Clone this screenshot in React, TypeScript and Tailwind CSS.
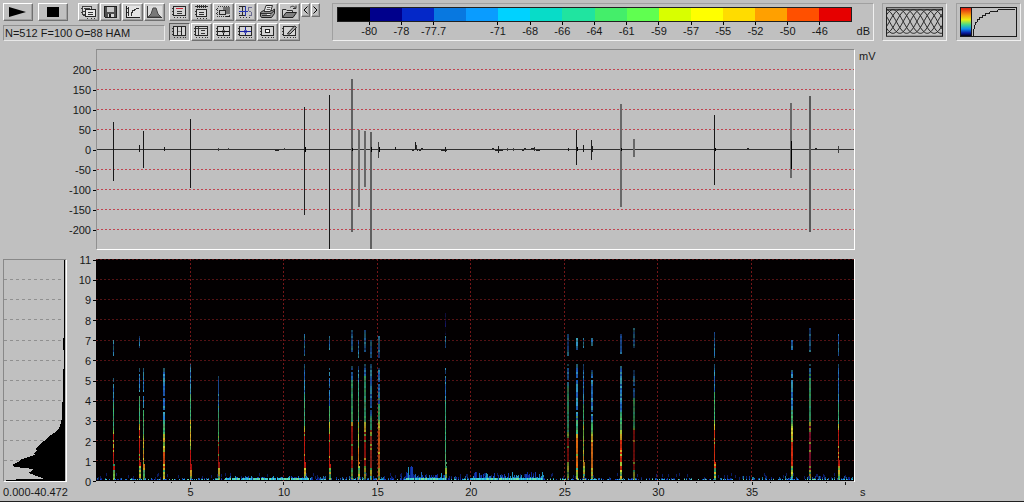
import React from 'react';

const LEVELS = [
  { color: '#000000', label: '-80' },
  { color: '#00008c', label: '-78' },
  { color: '#0428c8', label: '-77.7' },
  { color: '#0878e0', label: '' },
  { color: '#0a9cff', label: '-71' },
  { color: '#00d2ff', label: '-68' },
  { color: '#08dcc8', label: '-66' },
  { color: '#20e4a0', label: '-64' },
  { color: '#44ee6a', label: '-61' },
  { color: '#60ff50', label: '-59' },
  { color: '#d8ff00', label: '-57' },
  { color: '#ffff00', label: '-55' },
  { color: '#ffdc00', label: '-52' },
  { color: '#ffa000', label: '-50' },
  { color: '#ff5000', label: '-46' },
  { color: '#e60000', label: '' },
];

const MILLIVOLTS = [200, 150, 100, 50, 0, -50, -100, -150, -200];
const KILOHERTZ = [11, 10, 9, 8, 7, 6, 5, 4, 3, 2, 1, 0];
const SECONDS = [5, 10, 15, 20, 25, 30, 35];

// x, top, bottom, width, colour
const SPIKES: [number, number, number, number, string][] = [
  [16, 72, 131, 1, '#181818'],
  [42, 95, 102, 1, '#181818'],
  [46, 81, 118, 1, '#181818'],
  [67, 97, 101, 1, '#181818'],
  [93, 69, 138, 1, '#181818'],
  [121, 98, 101, 1, '#404040'],
  [131, 98, 100, 1, '#404040'],
  [187, 98, 100, 1, '#404040'],
  [207, 57, 165, 1, '#202020'],
  [208, 97, 102, 1, '#000'],
  [232, 45, 199, 1, '#181818'],
  [254, 29, 182, 2, '#606060'],
  [255, 98, 101, 1, '#000'],
  [261, 80, 157, 2, '#686868'],
  [267, 81, 137, 2, '#686868'],
  [273, 82, 199, 2, '#606060'],
  [274, 97, 102, 1, '#000'],
  [281, 92, 108, 1, '#404040'],
  [282, 97, 102, 1, '#000'],
  [298, 97, 100, 1, '#181818'],
  [318, 92, 99, 1, '#181818'],
  [319, 95, 99, 1, '#303030'],
  [348, 97, 102, 1, '#181818'],
  [401, 96, 103, 1, '#181818'],
  [410, 98, 101, 1, '#404040'],
  [416, 98, 101, 1, '#404040'],
  [437, 97, 101, 1, '#303030'],
  [471, 98, 101, 1, '#181818'],
  [479, 80, 115, 1, '#181818'],
  [480, 97, 101, 1, '#000'],
  [486, 95, 102, 1, '#181818'],
  [494, 90, 110, 1, '#202020'],
  [495, 96, 102, 1, '#202020'],
  [523, 54, 157, 2, '#686868'],
  [524, 98, 101, 1, '#000'],
  [536, 89, 107, 2, '#686868'],
  [617, 65, 135, 1, '#181818'],
  [618, 98, 101, 1, '#000'],
  [693, 53, 128, 2, '#686868'],
  [694, 91, 119, 1, '#000'],
  [712, 46, 182, 2, '#585858'],
  [741, 96, 103, 1, '#404040'],
];

interface Click {
  x: number;
  w: number;
  upper: [number, number];
  top: number;
  green: number; // kHz under which the streak turns green
  yellow: number;
  red: number;
  hot: string;
  dim: number;
}

const click = (
  x: number, w: number, upper: [number, number], top: number,
  green: number, yellow: number, red: number, hot = '#d81c10', dim = 0.95,
): Click => ({ x, w, upper, top, green, yellow, red, hot, dim });

const CLICKS: Click[] = [
  click(17, 1, [6.3, 7], 5.1, 4, 2.6, 2.4),
  click(43, 1, [6.7, 7.2], 5.6, 4.2, 2.8, 2.6),
  click(47, 1, [0, 0], 5.6, 3.6, 2.4, 1.4, '#e08020'),
  click(67, 2, [0, 0], 5.6, 3, 2.4, 1.4, '#e05010'),
  click(94, 1, [0, 0], 5.8, 4.2, 3.1, 1.6, '#d01410'),
  click(122, 1, [0, 0], 5.2, 3.6, 2.1, 2, '#c01810', 0.85),
  click(208, 1, [6.3, 7.3], 5.8, 4.2, 2.8, 2.3),
  click(233, 1, [6.6, 7.2], 5.6, 3.7, 3, 2.3),
  click(255, 2, [6.5, 7.5], 5.7, 5.2, 3, 2.7, '#c01810', 0.75),
  click(262, 1, [6.2, 7], 5.7, 5, 2.8, 1.6, '#e88018'),
  click(268, 2, [6.5, 7.5], 5.8, 5.2, 3, 2.6, '#c01810', 0.75),
  click(274, 2, [6.2, 7], 5.8, 3.2, 2.6, 2.4, '#c03020', 0.75),
  click(282, 2, [6.2, 7.2], 5.7, 4, 3.1, 2.6, '#e86418', 0.8),
  click(349, 1, [6.7, 7.2], 5.7, 4, 0, 0, '#40e868'),
  click(471, 2, [6.3, 7.3], 5.8, 4.8, 2.4, 2.1, '#b01410', 0.65),
  click(480, 2, [6.6, 7.1], 5.8, 3.2, 2.4, 2.1, '#f07010', 1),
  click(487, 1, [6.7, 7.1], 5.8, 4, 2.9, 1.3, '#e09020', 0.9),
  click(495, 2, [6.8, 7.1], 5.5, 3.1, 2.5, 1.9, '#f07818', 0.9),
  click(524, 2, [6.4, 7.3], 5.8, 3.4, 2.5, 2.1, '#e83010', 0.95),
  click(537, 2, [6.7, 7.6], 5.5, 4.2, 2.6, 2.5, '#b01410', 0.6),
  click(618, 1, [6.2, 7.4], 5.8, 4.6, 3.2, 2.6, '#e03010', 1),
  click(695, 2, [6.6, 7], 5.6, 3.5, 2.8, 2, '#e83010', 0.95),
  click(713, 2, [6.5, 7.6], 5.8, 5.2, 3, 2.6, '#a8143c', 0.75),
  click(742, 1, [6.3, 7.3], 5.8, 4, 3, 2.5),
];

const kHzToY = (kHz: number) => 222 - kHz * 20.13;
const secToX = (s: number) => 1 + s * 18.69;

const makeRandom = (seed: number) => {
  let state = seed;
  return () => {
    state = (state * 1664525 + 1013904223) % 4294967296;
    return state / 4294967296;
  };
};

const BLUES = ['#2060c8', '#2888e0', '#38a8e0', '#2060b8', '#40b0c8'];
const GREENS = ['#38b878', '#48d070', '#58b070', '#38c098'];
const YELLOWS = ['#b0d840', '#e0e038', '#78c848', '#e8b828'];
const FLOOR = ['#0c2cb8', '#1848d8', '#2080e8', '#28b8f0', '#48e0d8', '#80f098'];

interface Cell {
  x: number;
  y: number;
  w: number;
  h: number;
  fill: string;
  o: number;
}

const buildCells = (): Cell[] => {
  const rnd = makeRandom(77);
  const pick = (list: string[]) => list[Math.floor(rnd() * list.length)];
  const cells: Cell[] = [];

  CLICKS.forEach((c) => {
    for (let y = kHzToY(c.top); y < 221; y += 2) {
      const k = (222 - y) / 20.13 + (rnd() - 0.5) * 0.3;
      if (k > c.green && rnd() < 0.07) continue;
      let fill = pick(BLUES);
      if (k < 0.7) fill = rnd() < 0.7 ? pick(YELLOWS) : pick(GREENS);
      else if (k < c.red) fill = rnd() < 0.85 ? c.hot : pick(YELLOWS);
      else if (k < c.yellow) fill = pick(YELLOWS);
      else if (k < c.green) fill = pick(GREENS);
      const fade = k > c.top - 0.2 ? 0.6 : 1;
      cells.push({ x: c.x, y: Math.round(y), w: k < 0.9 ? 2 : c.w, h: 2, fill, o: c.dim * fade * (0.8 + rnd() * 0.2) });
    }
    for (let y = kHzToY(c.upper[1]); y < kHzToY(c.upper[0]); y += 2) {
      cells.push({ x: c.x, y: Math.round(y), w: c.w, h: 2, fill: pick(BLUES), o: c.dim * (0.5 + rnd() * 0.4) });
    }
  });

  // faint tail above the click near 18.6 s
  for (let y = 54; y < 75; y += 2) {
    cells.push({ x: 349, y, w: 1, h: 2, fill: '#181870', o: rnd() });
  }

  // low frequency noise floor
  for (let x = 0; x < 758; x++) {
    let height = 1;
    let density = 0.5;
    if (x > 128 && x < 215) { height = 3; density = 0.85; }
    if (x >= 215 && x < 310) { height = 3; density = 0.6; }
    if (x >= 310 && x < 318) { height = 13; density = 1; }
    if (x >= 318 && x < 350) { height = 7; density = 1; }
    if (x >= 350 && x < 374) { height = 3; density = 0.7; }
    if (x >= 374 && x < 448) { height = 7; density = 1; }
    if (x > 640) height = 3;
    if (rnd() < density) {
      const h = 1 + rnd() * height;
      const busy = density > 0.8;
      cells.push({ x, y: 221 - h, w: 1, h, fill: FLOOR[Math.floor(rnd() * 4)], o: busy ? 0.8 : 0.65 });
      cells.push({ x, y: busy ? 219 : 220, w: 1, h: busy ? 2 : 1, fill: busy ? pick(FLOOR.slice(3)) : pick(FLOOR), o: 0.9 });
    }
    if (rnd() < 0.12) {
      cells.push({ x, y: 214 + Math.floor(rnd() * 5), w: 1, h: 3, fill: '#0c2078', o: 0.8 });
    }
  }
  return cells;
};

const CELLS = buildCells();

const raised = 'border border-t-white border-l-white border-r-[#707070] border-b-[#707070] shadow-[inset_-1px_-1px_0_#a0a0a0]';
const etched = 'border border-t-[#a0a0a0] border-l-[#a0a0a0] border-r-[#f0f0f0] border-b-[#f0f0f0]';

// Plot frame with tick marks, shared by most of the tool icons
const Frame = () => (
  <>
    <path d="M3.5 2.5H15.5V11.5H3.5Z" fill="#d4d4d4" stroke="#282828" />
    <path d="M2 4.5H3M2 7.5H3M2 10.5H3M4 13.5H5M7 13.5H8M10 13.5H11M13 13.5H14M15 13.5H16" stroke="#383838" />
  </>
);

const Icon: React.FC<{ children: React.ReactNode }> = ({ children }) => (
  <svg viewBox="0 0 19 16" className="h-4 w-[19px]" fill="none" shapeRendering="crispEdges" aria-hidden="true">
    {children}
  </svg>
);

const FILE_TOOLS = [
  {
    name: 'Copy window',
    icon: (
      <>
        <path d="M3.5 2.5H12.5V10.5H3.5Z" fill="#d8d8d8" stroke="#404040" />
        <path d="M2 4.5H3M2 8.5H3M5 4.5H11" stroke="#404040" />
        <path d="M6.5 5.5H16.5V12.5H6.5Z" fill="#e8e8e8" stroke="#282828" />
        <path d="M4 7.5H6M4 11.5H6M9 8.5H14M9 10.5H14M8 14.5H9M12 14.5H13M15 14.5H16" stroke="#383838" />
      </>
    ),
  },
  {
    name: 'Save',
    icon: (
      <>
        <path d="M3.5 2.5H15.5V13.5H4.5L3.5 12.5Z" fill="#505050" stroke="#202020" />
        <path d="M6 3H13V8H6Z" fill="#c8c8c8" />
        <path d="M7 10H13V13H7Z" fill="#d8d8d8" />
        <path d="M8 10H10V13H8Z" fill="#202020" />
      </>
    ),
  },
  {
    name: 'Transfer curve',
    icon: (
      <>
        <path d="M3 2H17V14H3Z" fill="#e4e4e4" />
        <path d="M3.5 2V14M3 13.5H17" stroke="#202020" />
        <path d="M5.5 3V12M4 4.5H5M4 8.5H5" stroke="#303030" />
        <path d="M8.5 12V8M9.5 9V6M10 6.5H12M11 5.5H13M13 4.5H16" stroke="#303030" />
      </>
    ),
  },
  {
    name: 'Window function',
    icon: (
      <>
        <path d="M2 2H17V14H2Z" fill="#dcdcdc" />
        <path d="M3 13L6 10L8 4H11L13 10L16 13Z" fill="#787878" stroke="#484848" shapeRendering="auto" />
        <path d="M2.5 2V13.5H17" stroke="#383838" />
      </>
    ),
  },
];

const PLOT_TOOLS = [
  {
    name: 'Mark',
    icon: (
      <>
        <Frame />
        <path d="M6 4.5H13" stroke="#d02838" />
        <path d="M7 7.5H12M7 9.5H12" stroke="#383838" />
      </>
    ),
  },
  {
    name: 'Zoom time',
    icon: (
      <>
        <path d="M3 2.5H16M5.5 1V4M9.5 1V4M13.5 1V4M7.5 1V4M11.5 1V4" stroke="#303030" />
        <path d="M4.5 5.5H14.5V12.5H4.5Z" fill="#d8d8d8" stroke="#282828" />
        <path d="M3 7.5H4M3 10.5H4M7 8.5H12M7 10.5H12M5 14.5H6M8 14.5H9M11 14.5H12M14 14.5H15" stroke="#303030" />
      </>
    ),
  },
  {
    name: 'Select region',
    icon: (
      <>
        <path d="M3.5 2.5H15.5V12.5H3.5Z" stroke="#383838" strokeDasharray="1 1" />
        <path d="M9 3H16V10H9Z" fill="#707070" />
        <path d="M5.5 6.5H11.5V10.5H5.5Z" fill="#c8c8c8" stroke="#282828" />
        <path d="M2 5.5H3M2 9.5H3M12 12.5H16" stroke="#202020" />
      </>
    ),
  },
  {
    name: 'Spectrum',
    icon: (
      <>
        <path d="M3 2.5H9M3 11.5H9M3.5 4V5M3.5 9V10M6.5 3V11" stroke="#282828" />
        <path d="M3 7.5H12M9.5 2V12" stroke="#2838b0" />
        <path d="M15.5 3.5H12.5V6.5L15.5 8.5V11.5H12.5" stroke="#6c6c90" />
        <path d="M4 13.5H5M7 13.5H8M10 13.5H11M13 13.5H14" stroke="#383838" />
      </>
    ),
  },
  {
    name: 'Print',
    icon: (
      <g shapeRendering="auto">
        <path d="M2.5 8.5L5.5 6.5H14.5L16.5 5V9.5L13.5 13.5H3.5L2.5 12Z" fill="#909090" stroke="#202020" />
        <path d="M6 7.5L8 1.5H14.5L12.5 7.5Z" fill="#e8e8e8" stroke="#303030" />
        <path d="M9 3.5H12.5M8.5 5.5H12" stroke="#585858" />
        <path d="M3 9.5H13L16 7M4 11.5H12.5" stroke="#303030" />
        <path d="M9 10.5H12" stroke="#f0f0f0" />
      </g>
    ),
  },
  {
    name: 'Open',
    icon: (
      <g shapeRendering="auto">
        <path d="M2.5 13.5V5.5H6L7 6.5H12.5V8.5" fill="#d0d0d0" stroke="#303030" />
        <path d="M2.5 13.5L6 8.5H16.5L13 13.5Z" fill="#808080" stroke="#202020" />
        <path d="M10 3.5C12 1.5 14 2 15.5 4M16 1.5V4.5H13" stroke="#303030" />
      </g>
    ),
  },
  {
    name: 'Columns layout',
    pressed: true,
    icon: (
      <>
        <Frame />
        <path d="M7.5 3V11M11.5 3V11" stroke="#202020" />
        <path d="M8 7.5H11" stroke="#888888" />
      </>
    ),
  },
  {
    name: 'List layout',
    icon: (
      <>
        <Frame />
        <path d="M6.5 3V11M4 4.5H15M9 6.5H13M9 9.5H13" stroke="#383838" />
      </>
    ),
  },
  {
    name: 'Crosshair',
    icon: (
      <>
        <Frame />
        <path d="M9.5 3V11M4 7.5H15" stroke="#101010" />
        <path d="M8 6.5H11M8 8.5H11" stroke="#707070" />
      </>
    ),
  },
  {
    name: 'Blue crosshair',
    icon: (
      <>
        <Frame />
        <path d="M9.5 3V11M4 7.5H15" stroke="#1820a0" />
        <path d="M8 6.5H11M8 8.5H11" stroke="#5860c0" />
      </>
    ),
  },
  {
    name: 'Box cursor',
    icon: (
      <>
        <Frame />
        <path d="M7.5 5.5H11.5V8.5H7.5Z" fill="#fff" stroke="#202020" />
      </>
    ),
  },
  {
    name: 'Annotate',
    icon: (
      <>
        <Frame />
        <path d="M7.5 9.5L14.5 2L16.5 3.5L10 10H7.5Z" fill="#a8a8a8" stroke="#202020" shapeRendering="auto" />
      </>
    ),
  },
];

const ToolButton: React.FC<{ name: string; pressed?: boolean; children: React.ReactNode }> = ({ name, pressed, children }) => (
  <button
    aria-label={name}
    aria-pressed={pressed}
    className={`flex h-[18px] w-[21px] items-center justify-center ${
      pressed ? 'border border-t-[#606060] border-l-[#606060] border-r-white border-b-white bg-[#b4b4b4]' : `${raised} bg-[#c8c8c8]`
    }`}
  >
    <Icon>{children}</Icon>
  </button>
);

const ColorScale = () => (
  <div className={`flex flex-1 pt-[3px] pr-[3px] pl-1 ${etched}`}>
    <div className="flex-1">
      <div className="grid h-[15px] grid-cols-16 border border-[#202020]">
        {LEVELS.map((l) => (
          <span key={l.color} style={{ backgroundColor: l.color }} />
        ))}
      </div>
      <div className="grid grid-cols-[1fr_repeat(15,2fr)_1fr]">
        <span />
        {LEVELS.slice(0, 15).map((l) => (
          <span key={l.color} className="flex flex-col items-center leading-[13px]">
            {l.label && <span className="h-[3px] w-px bg-black" />}
            {l.label}
          </span>
        ))}
      </div>
    </div>
    <span className="w-[18px] self-end pb-[2px] text-right">dB</span>
  </div>
);

const bellPath = (phase: number) => {
  const points = [];
  for (let x = 0; x <= 58; x++) {
    points.push(`${x},${(14.5 - 12 * Math.cos(((x + phase) * Math.PI * 2) / 42)).toFixed(1)}`);
  }
  return points.join(' ');
};

const OverlapThumb = () => (
  <div className={`h-[38px] w-[65px] p-[3px] ${etched}`}>
    <svg viewBox="0 0 58 30" className="h-[30px] w-full" fill="none" stroke="#202020">
      {[0, 7, 14, 21, 28, 35].map((p) => (
        <polyline key={p} points={bellPath(p)} />
      ))}
      <path d="M0 2.5H58" />
      <rect x="0.5" y="0.5" width="57" height="29" />
    </svg>
  </div>
);

const GainThumb = () => (
  <div className={`h-[38px] w-[65px] p-[3px] ${etched}`}>
    <svg viewBox="0 0 58 30" className="h-[30px] w-full" fill="none" stroke="#181818" shapeRendering="crispEdges">
      <defs>
        <linearGradient id="rainbow" x1="0" y1="0" x2="0" y2="1">
          <stop offset="0" stopColor="#e02010" />
          <stop offset="0.25" stopColor="#f8a010" />
          <stop offset="0.42" stopColor="#e8f010" />
          <stop offset="0.6" stopColor="#40d890" />
          <stop offset="0.75" stopColor="#1090f0" />
          <stop offset="0.9" stopColor="#0818a0" />
          <stop offset="1" stopColor="#000020" />
        </linearGradient>
      </defs>
      <rect x="1" y="1" width="10" height="28" fill="url(#rainbow)" stroke="none" />
      <path d="M11.5 0V30" />
      <path d="M13.5 29V22.5H14.5V18.5H15.5V15.5H17.5V12.5H19.5V10.5H22.5V8.5H25.5V6.5H30.5V4.5H38.5V2.5H56" />
      <rect x="0.5" y="0.5" width="57" height="29" />
    </svg>
  </div>
);

const AxisLabel: React.FC<{ value: number }> = ({ value }) => (
  <span className="flex h-5 items-center justify-end gap-[2px]">
    {value}
    <span className="h-px w-[3px] bg-black" />
  </span>
);

const Waveform = () => (
  <div className="min-w-0 flex-1 border border-t-[#888888] border-l-[#909090] border-r-white border-b-white">
    <svg viewBox="0 0 757 199" preserveAspectRatio="none" className="block h-[199px] w-full" shapeRendering="crispEdges" role="img" aria-label="Waveform">
      {MILLIVOLTS.filter((v) => v !== 0).map((v) => (
        <path key={v} d={`M0 ${99.5 - v * 0.4}H757`} stroke="#c04450" strokeDasharray="2 2" />
      ))}
      <path d="M0 99.5H757" stroke="#303030" />
      {SPIKES.map(([x, top, bottom, w, fill]) => (
        <rect key={`${x}-${top}`} x={x} y={top} width={w} height={bottom - top} fill={fill} />
      ))}
      <path d="M178 100.5H182M315 100.5H317M320 98.5V101M322 100.5H324M324 98.5H326M344 100.5H350M395 98.5H397M398 100.5H406M425 100.5H427M427 98.5H429M434 98.5H438M439 100.5H443M650 98.5H652M718 98.5H720" stroke="#202020" />
    </svg>
  </div>
);

const Spectrogram = () => (
  <svg viewBox="0 0 758 223" preserveAspectRatio="none" className="block h-[223px] w-full border-r border-white bg-[#030001]" shapeRendering="crispEdges" role="img" aria-label="Spectrogram">
    {KILOHERTZ.slice(0, 11).map((k) => (
      <path key={k} d={`M0 ${Math.floor(kHzToY(k)) + 0.5}H758`} stroke="#541214" strokeDasharray="2 2" />
    ))}
    {SECONDS.map((s) => (
      <path key={s} d={`M${Math.floor(secToX(s)) + 0.5} 0V222`} stroke="#741618" strokeDasharray="2 2" />
    ))}
    {CELLS.map((c, i) => (
      <rect key={i} x={c.x} y={c.y} width={c.w} height={c.h} fill={c.fill} opacity={c.o} />
    ))}
    <path d="M0 222.5H758" stroke="#c0c0c0" />
  </svg>
);

const TimeTicks = () => (
  <svg viewBox="0 0 758 3" preserveAspectRatio="none" className="block h-[3px] w-full" shapeRendering="crispEdges" aria-hidden="true">
    {Array.from({ length: 40 }, (_, s) => (
      <rect key={s} x={Math.floor(secToX(s + 1))} y="0" width="1" height={(s + 1) % 5 === 0 ? 3 : 1} fill="#181818" />
    ))}
  </svg>
);

const Histogram = () => (
  <div className="border border-t-[#888888] border-l-[#888888] border-r-white border-b-white">
    <svg viewBox="0 0 62 221" className="block h-[221px] w-full" shapeRendering="crispEdges" role="img" aria-label="Mean spectrum">
      {KILOHERTZ.slice(0, 11).map((k) => (
        <path key={k} d={`M0 ${Math.floor(kHzToY(k)) - 0.5}H60`} stroke="#909090" strokeDasharray="3 3" />
      ))}
      <path
        d="M60 0V78H59V90H60V107L59 112V140L58 144V158L57 163L55 168L50 173L44 177L40 181L36 184L33 187L32 189L33 191L30 193L31 195L24 197L18 199L14 202L8 205L11 207L20 208L29 209L28 211L24 213L30 215L38 218L40 219H12V220H2V221H61V0Z"
        fill="#000"
      />
    </svg>
  </div>
);

const App: React.FC = () => {
  return (
    <div className="min-h-screen border-b border-[#202020] bg-[#c0c0c0] font-['Liberation_Sans',Arial,sans-serif] text-[11px] leading-[14px] text-[#181818]">
      <header className="flex items-start px-[3px] pt-[3px]">
        <div className="mr-1 w-[162px]">
          <div className="flex">
            <button aria-label="Play" className={`mr-[5px] flex h-[18px] w-[30px] items-center justify-center ${raised}`}>
              <svg viewBox="0 0 18 10" className="h-[10px] w-[18px]" aria-hidden="true"><path d="M0 0L17 5L0 10Z" fill="#000" /></svg>
            </button>
            <button aria-label="Stop" className={`mr-[10px] flex h-[18px] w-[30px] items-center justify-center ${raised}`}>
              <span className="h-[10px] w-3 bg-black" />
            </button>
            <div className="flex gap-px">
              {FILE_TOOLS.map((t) => (
                <ToolButton key={t.name} name={t.name}>{t.icon}</ToolButton>
              ))}
            </div>
          </div>
          <div className="mt-1 border border-t-[#909090] border-l-[#909090] border-r-[#e8e8e8] border-b-[#e8e8e8] pl-px whitespace-nowrap">
            N=512 F=100 O=88 HAM
          </div>
        </div>

        <div className="mr-px grid grid-cols-6 gap-x-px gap-y-[2px]">
          {PLOT_TOOLS.map((t) => (
            <ToolButton key={t.name} name={t.name} pressed={t.pressed}>{t.icon}</ToolButton>
          ))}
        </div>
        <div className="mr-3 flex gap-px">
          <button aria-label="Previous" className={`flex h-[14px] w-[9px] items-center justify-center ${raised}`}>
            <svg viewBox="0 0 5 8" className="h-2 w-[5px]" fill="none" aria-hidden="true"><path d="M4.5 0.5L1 4L4.5 7.5" stroke="#000" /></svg>
          </button>
          <button aria-label="Next" className={`flex h-[14px] w-[9px] items-center justify-center ${raised}`}>
            <svg viewBox="0 0 5 8" className="h-2 w-[5px]" fill="none" aria-hidden="true"><path d="M0.5 0.5L4 4L0.5 7.5" stroke="#000" /></svg>
          </button>
        </div>

        <div className="flex h-[38px] flex-1">
          <ColorScale />
        </div>
        <div className="ml-2 flex gap-[9px]">
          <OverlapThumb />
          <GainThumb />
        </div>
      </header>

      <main>
        <section className="mt-2 flex">
          <div className="w-24 shrink-0 pt-[11px]">
            {MILLIVOLTS.map((v) => (
              <AxisLabel key={v} value={v} />
            ))}
          </div>
          <Waveform />
          <span className="w-[169px] shrink-0 pl-1">mV</span>
        </section>

        <section className="flex items-stretch">
          <div className="w-[67px] shrink-0 pt-[9px] pl-[3px]">
            <Histogram />
            <span className="block pt-[3px] whitespace-nowrap">0.000-40.472</span>
          </div>
          <div className="flex h-[242px] w-[29px] shrink-0 flex-col justify-between">
            {KILOHERTZ.map((k) => (
              <AxisLabel key={k} value={k} />
            ))}
          </div>
          <div className="min-w-0 flex-1 pt-[9px]">
            <Spectrogram />
            <TimeTicks />
            <div className="grid grid-cols-[51fr_repeat(7,100fr)_60fr] text-center">
              <span />
              {SECONDS.map((s) => (
                <span key={s}>{s}</span>
              ))}
            </div>
          </div>
          <span className="w-[169px] shrink-0 self-end pl-[5px]">s</span>
        </section>
      </main>
    </div>
  );
};

export default App;
